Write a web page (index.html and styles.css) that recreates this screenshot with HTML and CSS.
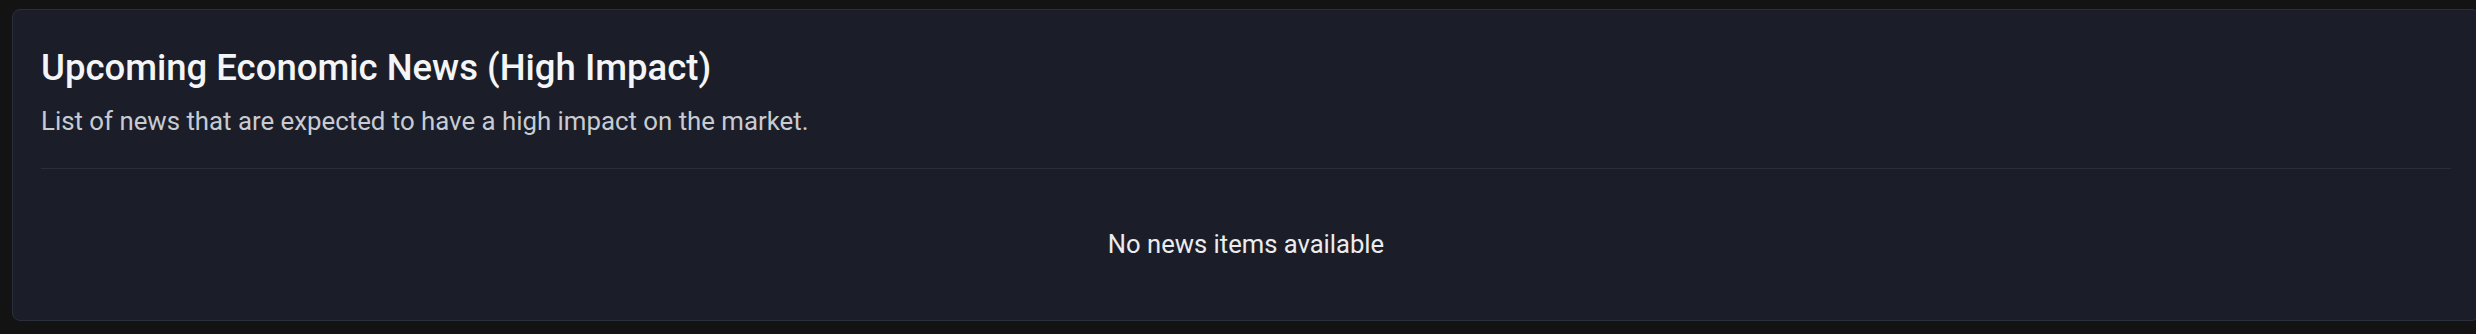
FILE: index.html
```html
<!DOCTYPE html>
<html lang="en">
<head>
<meta charset="utf-8">
<title>Upcoming Economic News</title>
<link rel="stylesheet" href="styles.css">
</head>
<body>
<section class="card">
  <header class="card-header">
    <h2 class="card-title">Upcoming Economic News (High Impact)</h2>
    <p class="card-subtitle">List of news that are expected to have a high impact on the market.</p>
  </header>
  <div class="card-body">
    <p class="empty">No news items available</p>
  </div>
</section>
</body>
</html>
```
FILE: styles.css
```css
html, body {
  margin: 0;
  padding: 0;
  background: #131313;
  overflow: hidden;
}
body {
  font-family: Roboto, "Liberation Sans", sans-serif;
  padding: 9px 0 0 12px;
}
.card {
  box-sizing: border-box;
  width: 2468px;
  background: #1b1e29;
  border: 1px solid #2b2f3b;
  border-radius: 8px;
  padding: 32px 28px 0 28px;
}
.card-header {
  border-bottom: 1px solid #2b2e39;
  padding-bottom: 27.6px;
}
.card-title {
  margin: 0;
  font-size: 36.5px;
  line-height: 51.2px;
  font-weight: 500;
  color: #f4f5f7;
}
.card-subtitle {
  margin: 9px 0 0 0;
  font-size: 25.8px;
  line-height: 38.4px;
  font-weight: 400;
  color: #c8cbd2;
}
.card-body {
  padding: 56px 0;
  text-align: center;
}
.empty {
  margin: 0;
  font-size: 25.6px;
  line-height: 38.4px;
  color: #ebecef;
}
```
